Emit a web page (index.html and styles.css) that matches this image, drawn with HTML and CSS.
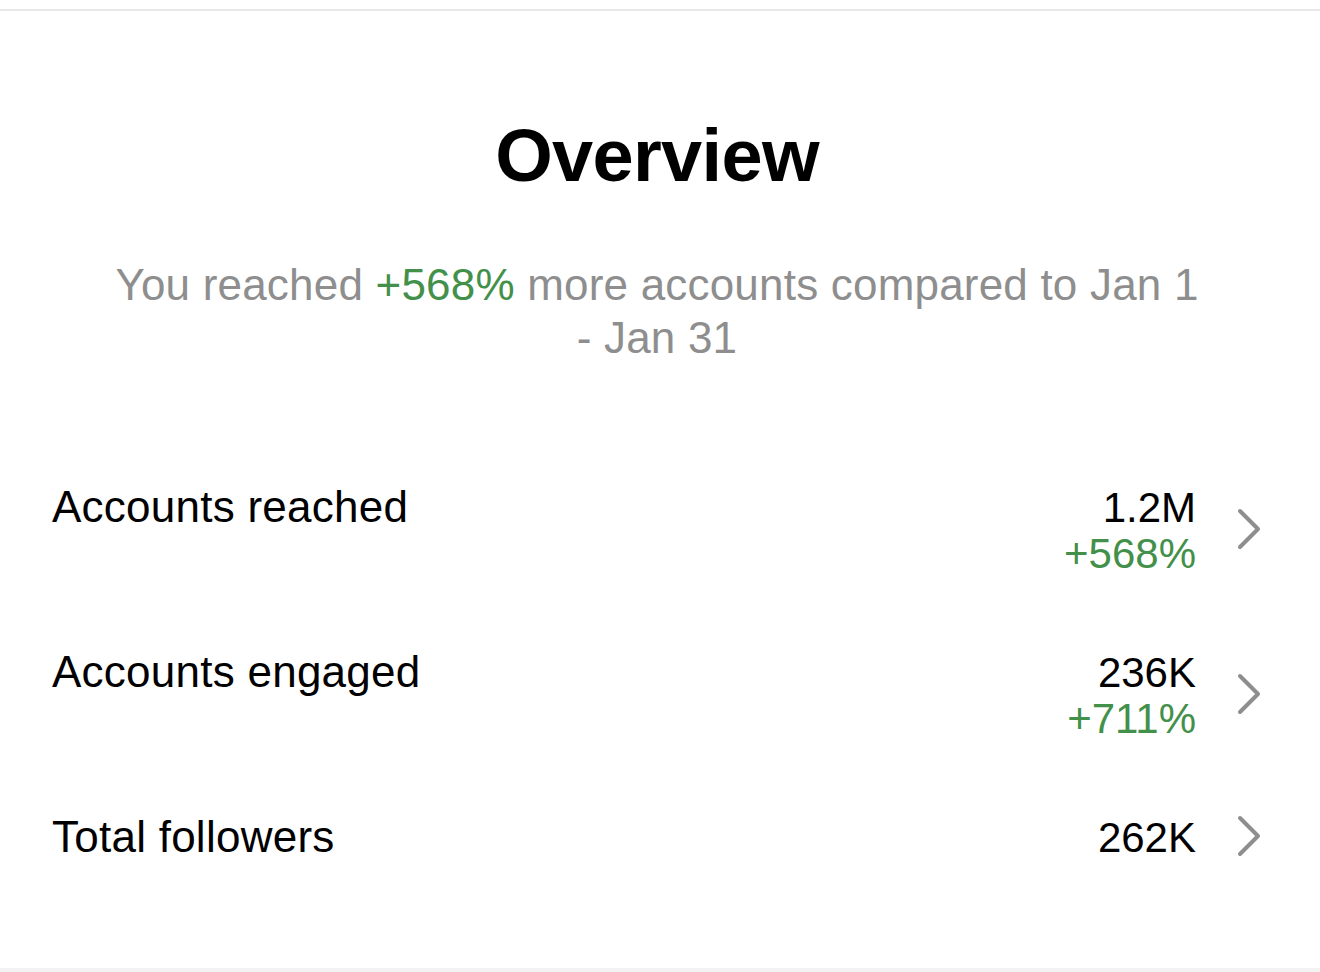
FILE: index.html
```html
<!DOCTYPE html>
<html lang="en">
<head>
<meta charset="utf-8">
<title>Overview</title>
<link rel="stylesheet" href="styles.css">
</head>
<body>
<div class="topbar"></div>
<main class="card">
  <h1 class="title">Overview</h1>
  <p class="subtitle">You reached <span class="up">+568%</span> more accounts compared to Jan 1 - Jan 31</p>
  <div class="rows">
    <div class="row">
      <div class="label">Accounts reached</div>
      <div class="right">
        <div class="values">
          <div class="value">1.2M</div>
          <div class="value up">+568%</div>
        </div>
        <svg class="chev" width="26" height="44" viewBox="0 0 26 44"><path d="M4 4 L22 22 L4 40" fill="none" stroke="#8e8e8e" stroke-width="4" stroke-linecap="round" stroke-linejoin="round"/></svg>
      </div>
    </div>
    <div class="row">
      <div class="label">Accounts engaged</div>
      <div class="right">
        <div class="values">
          <div class="value">236K</div>
          <div class="value up">+711%</div>
        </div>
        <svg class="chev" width="26" height="44" viewBox="0 0 26 44"><path d="M4 4 L22 22 L4 40" fill="none" stroke="#8e8e8e" stroke-width="4" stroke-linecap="round" stroke-linejoin="round"/></svg>
      </div>
    </div>
    <div class="row">
      <div class="label">Total followers</div>
      <div class="right">
        <div class="values">
          <div class="value">262K</div>
        </div>
        <svg class="chev" width="26" height="44" viewBox="0 0 26 44"><path d="M4 4 L22 22 L4 40" fill="none" stroke="#8e8e8e" stroke-width="4" stroke-linecap="round" stroke-linejoin="round"/></svg>
      </div>
    </div>
  </div>
</main>
</body>
</html>
```
FILE: styles.css
```css
* { box-sizing: border-box; }
html, body { margin: 0; padding: 0; }
body {
  background: #f2f2f2;
  font-family: "Liberation Sans", Arial, sans-serif;
  color: #000;
  width: 1320px;
  height: 972px;
  overflow: hidden;
}
.topbar {
  height: 9px;
  background: #fff;
}
.card {
  background: #fff;
  border-top: 2px solid #e8e8e8;
  height: 959px;
  padding: 102px 58px 0 52px;
}
.title {
  margin: 0;
  text-align: center;
  font-size: 74px;
  line-height: 86px;
  font-weight: 700;
  letter-spacing: -0.7px;
}
.subtitle {
  margin: 59px auto 0;
  width: 1100px;
  text-align: center;
  font-size: 44px;
  line-height: 53px;
  letter-spacing: 0.2px;
  color: #8e8e8e;
}
.up { color: #43904a; }
.rows {
  margin-top: 117px;
  display: flex;
  flex-direction: column;
  gap: 69px;
}
.row {
  display: flex;
  justify-content: space-between;
  align-items: flex-start;
}
.label {
  font-size: 44px;
  line-height: 52px;
  letter-spacing: 0.25px;
}
.right {
  display: flex;
  align-items: center;
  gap: 40px;
}
.values {
  margin-top: 4px;
  text-align: right;
}
.value {
  font-size: 42px;
  line-height: 46px;
}
.chev { display: block; }
```
